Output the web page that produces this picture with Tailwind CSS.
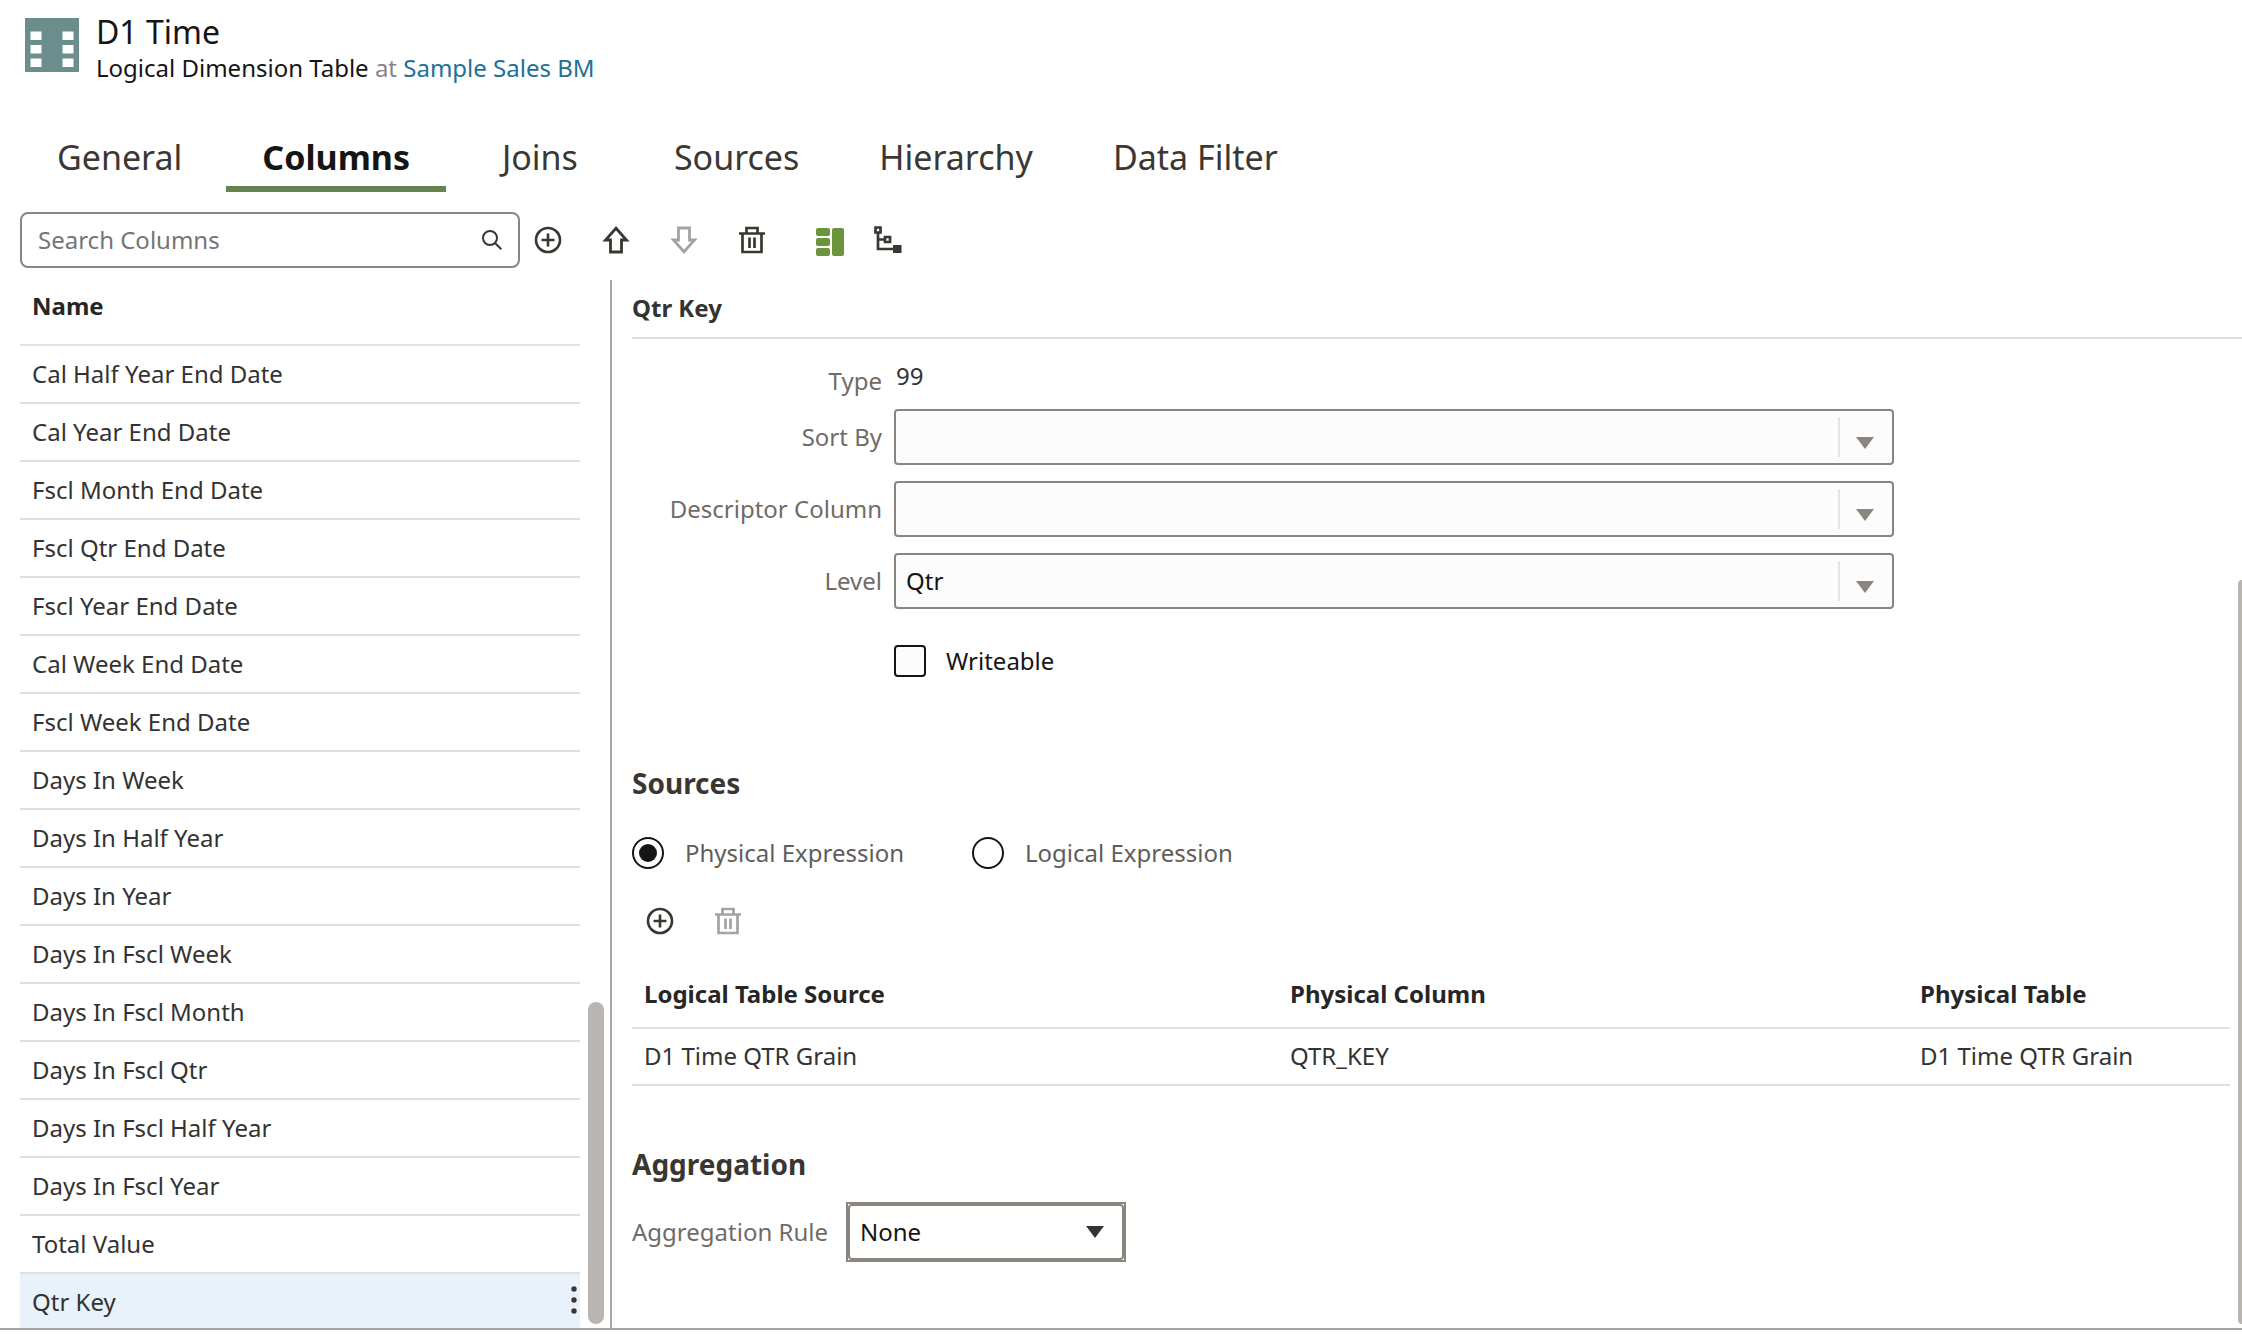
<!DOCTYPE html>
<html lang="en">
<head>
<meta charset="utf-8">
<meta name="viewport" content="width=device-width, initial-scale=1">
<title>D1 Time - Columns</title>
<script src="https://cdn.jsdelivr.net/npm/@tailwindcss/browser@4"></script>
</head>
<body class="flex h-screen flex-col overflow-hidden bg-white pb-1 font-['Noto_Sans',sans-serif] text-[24px] leading-8 text-[#333]">
<svg class="hidden" aria-hidden="true">
  <symbol id="plus" viewBox="0 0 28 28"><g fill="none" stroke="currentColor" stroke-width="2.6"><circle cx="14" cy="14" r="12"/><path d="M14 7.500V20.500M7.500 14H20.500"/></g></symbol>
  <symbol id="arrow" viewBox="0 0 28 28"><path d="M14 2.200L3.500 14H8.500V26H19.500V14H24.500Z" fill="none" stroke="currentColor" stroke-width="2.8"/></symbol>
  <symbol id="trash" viewBox="0 0 28 28"><path d="M1 7.500H27M8.500 7V2H19.500V7M4.500 7.500V26H23.500V7.500M11.500 11.500V22M16.500 11.500V22" fill="none" stroke="currentColor" stroke-width="2.7"/></symbol>
</svg>

<header class="flex gap-[17px] pt-[14px] pl-6">
  <svg class="mt-1 h-[55px] w-[55px]" viewBox="0 0 55 55" aria-hidden="true"><rect width="54" height="54" x="1" fill="#6b8e8c"/><path d="M6.500 13.500h11v8.500h-11zM38.500 13.500h11v8.500h-11zM6.500 27h11v8.500h-11zM38.500 27h11v8.500h-11zM6.500 40.500h11v8.500h-11zM38.500 40.500h11v8.500h-11z" fill="#fff"/></svg>
  <div>
    <h1 class="text-[32px] leading-9 text-[#161513]">D1 Time</h1>
    <p class="leading-9 text-[#161513]">Logical Dimension Table <span class="text-[#8a847f]">at</span> <a href="#" class="text-[#227096]">Sample Sales BM</a></p>
  </div>
</header>

<nav class="mt-7 flex px-[25px] text-[34px] leading-[50px] text-[#3b3733]">
  <a href="#" class="pt-[18px] pr-11 pb-1 pl-8">General</a>
  <a href="#" aria-current="page" class="border-b-6 border-[#67814f] px-9 pt-[18px] pb-1 font-bold text-[#161513]">Columns</a>
  <a href="#" class="pt-[18px] pr-14 pb-1 pl-14">Joins</a>
  <a href="#" class="px-10 pt-[18px] pb-1">Sources</a>
  <a href="#" class="pt-[18px] pr-10 pb-1 pl-10">Hierarchy</a>
  <a href="#" class="px-10 pt-[18px] pb-1">Data Filter</a>
</nav>

<div class="mt-5 flex items-center pl-5 text-[#3a3631]">
  <label class="flex h-14 w-[500px] items-center rounded-lg border-2 border-[#8b8580] px-4">
    <input type="text" placeholder="Search Columns" aria-label="Search Columns" class="min-w-0 flex-1 outline-none placeholder:text-[#757575]">
    <svg class="h-5 w-5" viewBox="0 0 20 20" fill="none" stroke="currentColor" stroke-width="2" aria-hidden="true"><circle cx="8" cy="8" r="7"/><path d="M13 13L19.300 19.300"/></svg>
  </label>
  <div class="ml-[14px] flex items-center gap-10">
    <button aria-label="Add column"><svg class="h-7 w-7"><use href="#plus"/></svg></button>
    <button aria-label="Move up"><svg class="h-7 w-7"><use href="#arrow"/></svg></button>
    <button aria-label="Move down" disabled class="text-[#a5a3a1]"><svg class="h-7 w-7 rotate-180"><use href="#arrow"/></svg></button>
    <button aria-label="Delete column"><svg class="h-7 w-7"><use href="#trash"/></svg></button>
  </div>
  <div class="ml-[50px] flex items-center gap-[30px]">
    <button aria-label="Detail view" class="pt-1"><svg class="h-7 w-7" viewBox="0 0 28 28" fill="#6b943c"><rect width="14" height="8" rx="2"/><rect y="10" width="14" height="8" rx="2"/><rect y="20" width="14" height="8" rx="2"/><rect x="16" width="12" height="28" rx="2"/></svg></button>
    <button aria-label="Hierarchy view"><svg class="h-7 w-7" viewBox="0 0 28 28" fill="none" stroke="currentColor" stroke-width="2.700"><path d="M1.500 1.500h5v5h-5zM4 7V23H20M4 13.500H10M11 11h5v5h-5z"/><path d="M19 19h8.500v8h-8.500z" fill="currentColor" stroke="none"/></svg></button>
  </div>
</div>

<main class="mt-3 flex min-h-0 flex-1 border-b-2 border-[#aaa5a1]">
  <section class="flex w-[612px] shrink-0 border-r-2 border-[#aaa5a1] pl-5" aria-label="Columns">
    <div class="w-[560px] shrink-0 overflow-hidden">
      <table class="w-full border-collapse text-left">
        <thead><tr class="h-[65px] border-b-2 border-[#e3e3e3]"><th class="px-3 pb-3 font-bold text-[#262626]">Name</th></tr></thead>
        <tbody class="[&>tr]:h-[58px] [&>tr]:border-b-2 [&>tr]:border-[#dfdfdf] [&_td]:px-3">
          <tr><td>Cal Half Year End Date</td></tr>
          <tr><td>Cal Year End Date</td></tr>
          <tr><td>Fscl Month End Date</td></tr>
          <tr><td>Fscl Qtr End Date</td></tr>
          <tr><td>Fscl Year End Date</td></tr>
          <tr><td>Cal Week End Date</td></tr>
          <tr><td>Fscl Week End Date</td></tr>
          <tr><td>Days In Week</td></tr>
          <tr><td>Days In Half Year</td></tr>
          <tr><td>Days In Year</td></tr>
          <tr><td>Days In Fscl Week</td></tr>
          <tr><td>Days In Fscl Month</td></tr>
          <tr><td>Days In Fscl Qtr</td></tr>
          <tr><td>Days In Fscl Half Year</td></tr>
          <tr><td>Days In Fscl Year</td></tr>
          <tr><td>Total Value</td></tr>
          <tr class="bg-[#e9f2fa]"><td><div class="-mr-3 flex items-center justify-between">Qtr Key<button aria-label="Row actions" class="pb-1"><svg class="h-8 w-3" viewBox="0 0 12 32" fill="#3a3631"><circle cx="6" cy="5" r="2.700"/><circle cx="6" cy="16" r="2.700"/><circle cx="6" cy="27" r="2.700"/></svg></button></div></td></tr>
        </tbody>
      </table>
    </div>
    <div class="flex flex-1 flex-col justify-end pb-1 pl-2"><div class="h-[322px] w-4 rounded-full bg-[#b9b5b1]"></div></div>
  </section>

  <section class="relative min-w-0 flex-1 overflow-hidden pl-5" aria-label="Column details">
    <h2 class="flex h-[59px] items-start border-b-2 border-[#e0e0e0] pt-3 font-bold text-[#333]">Qtr Key</h2>

    <form>
      <div class="grid max-w-[1262px] grid-cols-[250px_1fr] items-center gap-x-3 gap-y-4 pt-5 text-[#706b66]">
        <span class="pt-[10px] text-right leading-6">Type</span><span class="px-0.5 leading-6 text-[#333]">99</span>
        <label for="sort" class="text-right">Sort By</label>
        <div class="relative"><select id="sort" class="h-14 w-full appearance-none rounded-sm border-2 border-[#8b8580] bg-[#fcfcfc] px-[10px] text-[#161513]"><option></option></select><span class="pointer-events-none absolute inset-y-2 right-0 flex w-14 items-center justify-center border-l-2 border-[#e5e5e5] pt-3 pr-1"><svg class="h-3 w-[18px]" viewBox="0 0 18 12"><path d="M0 0H18L9 12Z" fill="#8b8580"/></svg></span></div>
        <label for="desc" class="text-right">Descriptor Column</label>
        <div class="relative"><select id="desc" class="h-14 w-full appearance-none rounded-sm border-2 border-[#8b8580] bg-[#fcfcfc] px-[10px] text-[#161513]"><option></option></select><span class="pointer-events-none absolute inset-y-2 right-0 flex w-14 items-center justify-center border-l-2 border-[#e5e5e5] pt-3 pr-1"><svg class="h-3 w-[18px]" viewBox="0 0 18 12"><path d="M0 0H18L9 12Z" fill="#8b8580"/></svg></span></div>
        <label for="level" class="text-right">Level</label>
        <div class="relative"><select id="level" class="h-14 w-full appearance-none rounded-sm border-2 border-[#8b8580] bg-[#fcfcfc] px-[10px] text-[#161513]"><option>Qtr</option></select><span class="pointer-events-none absolute inset-y-2 right-0 flex w-14 items-center justify-center border-l-2 border-[#e5e5e5] pt-3 pr-1"><svg class="h-3 w-[18px]" viewBox="0 0 18 12"><path d="M0 0H18L9 12Z" fill="#8b8580"/></svg></span></div>
        <label class="col-start-2 mt-5 flex items-center gap-5 text-[#161513]"><input type="checkbox" class="h-8 w-8 appearance-none rounded-sm border-2 border-[#161513] bg-[#fcfcfc] checked:bg-[#161513]">Writeable</label>
      </div>

      <h3 class="mt-[86px] text-[28px] leading-10 font-bold text-[#3a3631]">Sources</h3>
      <div class="mt-[34px] flex gap-[68px] text-[#5f5d5b]">
        <label class="flex items-center gap-[21px]"><input type="radio" name="expr" checked class="h-8 w-8 appearance-none rounded-full border-2 border-[#161513] bg-clip-content p-[5px] checked:bg-[#161513]">Physical Expression</label>
        <label class="flex items-center gap-[21px]"><input type="radio" name="expr" class="h-8 w-8 appearance-none rounded-full border-2 border-[#161513] bg-clip-content p-[5px] checked:bg-[#161513]">Logical Expression</label>
      </div>
      <div class="mt-[38px] flex gap-10 pl-[14px] text-[#3a3631]">
        <button type="button" aria-label="Add source"><svg class="h-7 w-7"><use href="#plus"/></svg></button>
        <button type="button" aria-label="Delete source" disabled class="text-[#a5a3a1]"><svg class="h-7 w-7"><use href="#trash"/></svg></button>
      </div>

      <div class="mt-[26px] pr-3">
        <table class="w-full table-fixed border-collapse text-left">
          <thead><tr class="h-[67px] border-b-2 border-[#e3e3e3] text-[#262626]"><th class="w-[646px] px-3 font-bold">Logical Table Source</th><th class="w-[630px] px-3 font-bold">Physical Column</th><th class="px-3 font-bold">Physical Table</th></tr></thead>
          <tbody><tr class="h-[57px] border-b-2 border-[#dfdfdf]"><td class="px-3 pb-0.5">D1 Time QTR Grain</td><td class="px-3 pb-0.5">QTR_KEY</td><td class="px-3 pb-0.5">D1 Time QTR Grain</td></tr></tbody>
        </table>
      </div>

      <h3 class="mt-[58px] text-[28px] leading-10 font-bold text-[#3a3631]">Aggregation</h3>
      <div class="mt-[18px] flex items-center gap-[18px]">
        <label for="rule" class="text-[#706b66]">Aggregation Rule</label>
        <div class="relative border-2 border-[#8b8580]"><select id="rule" class="block h-14 w-[276px] appearance-none rounded-sm border-2 border-[#8b8580] bg-white px-[10px] text-[#161513]"><option>None</option></select><svg class="pointer-events-none absolute inset-y-0 right-5 my-auto h-3 w-[18px]" viewBox="0 0 18 12"><path d="M0 0H18L9 12Z" fill="#333"/></svg></div>
      </div>
    </form>
    <div class="absolute top-[300px] right-0 bottom-1 w-1 rounded-l-md bg-[#b9b5b1]"></div>
  </section>
</main>
</body>
</html>
